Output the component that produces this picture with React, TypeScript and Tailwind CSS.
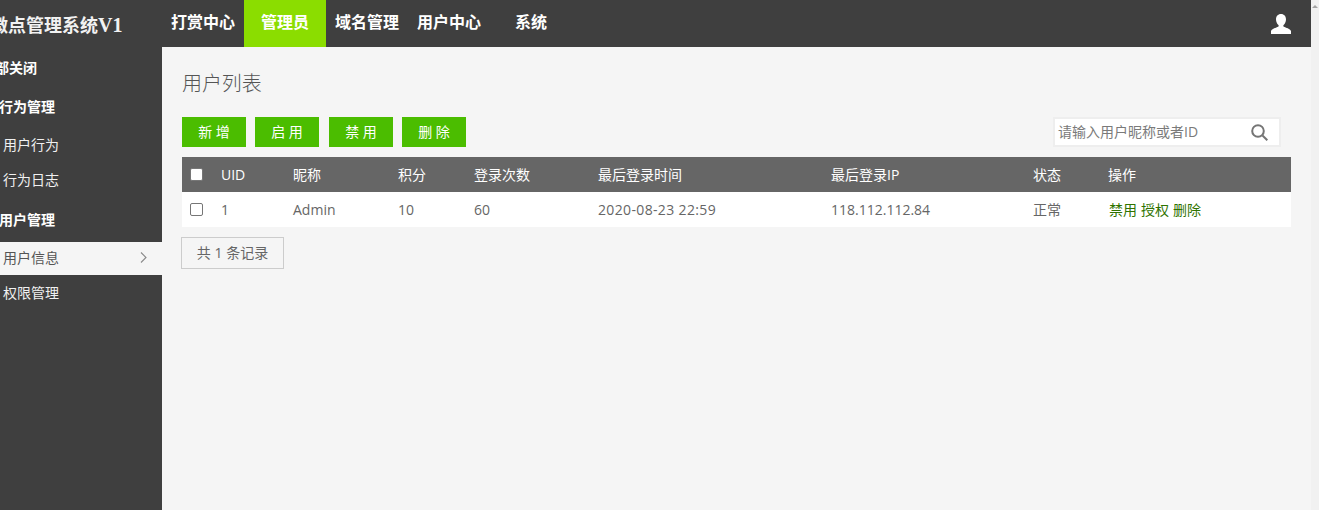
const sans = "font-['Open_Sans','Noto_Sans_CJK_SC',sans-serif]";

const navItems = [
  { label: '打赏中心', cls: 'pl-[171px] pr-[9px]' },
  { label: '管理员', cls: 'w-[82px] justify-center bg-[#8bdd00]' },
  { label: '域名管理', cls: 'pl-[9px] pr-[18px]' },
  { label: '用户中心', cls: 'pr-[34px]' },
  { label: '系统', cls: '' },
];

const actions = [
  { label: '新 增', cls: '' },
  { label: '启 用', cls: 'ml-[9px]' },
  { label: '禁 用', cls: 'ml-[10px]' },
  { label: '删 除', cls: 'ml-[9px]' },
];

const columns = 'grid grid-cols-[39px_72px_105px_76px_124px_233px_202px_75px_1fr] items-center h-[35px]';

function Check() {
  return <input type="checkbox" readOnly className="ml-2 block h-[13px] w-[13px] appearance-none rounded-[2px] border border-[#767676] bg-white" />;
}

function SideGroup({ label, cls }: { label: string; cls: string }) {
  return <div className={`flex h-[20px] items-center whitespace-nowrap text-[14px] font-bold text-white ${cls}`}>{label}</div>;
}

function SideItem({ label, active, cls }: { label: string; active?: boolean; cls: string }) {
  return (
    <div
      className={`flex h-[33px] items-center justify-between pl-[3px] pr-[15px] text-[14px] ${
        active ? 'bg-[#f5f5f5] text-[#555555]' : 'text-[#f0f0f0]'
      } ${cls}`}
    >
      <span>{label}</span>
      {active && (
        <svg width="7" height="11" viewBox="0 0 7 11" fill="none" stroke="#8a8a8a" strokeWidth="1.100">
          <path d="M1 .5l5 5-5 5" />
        </svg>
      )}
    </div>
  );
}

export default function App() {
  return (
    <div className={`flex h-[510px] w-[1319px] overflow-hidden bg-white ${sans}`}>
      <div className="flex h-full w-[1311px] flex-col">
        <header className="flex h-[47px] shrink-0 items-center justify-between bg-[#3f3f3f] text-white">
          <div className="relative flex h-full items-stretch text-[16px] font-bold">
            <div className="absolute left-[-10px] top-[14px] whitespace-nowrap font-['Liberation_Serif','Noto_Sans_CJK_SC',serif] text-[18px] font-bold leading-[22px] text-[#f2f2f2]">
              微点管理系统<span className="text-[20px]">V1</span>
            </div>
            {navItems.map(item => (
              <div key={item.label} className={`flex items-center pb-[3px] ${item.cls}`}>
                {item.label}
              </div>
            ))}
          </div>
          <svg className="mr-5" width="20" height="20" viewBox="0 0 20 20" fill="#ffffff">
            <path d="M10 0c3.200 0 5 2.300 5 5.300 0 2.400-1 4.600-2.400 5.800-.5.5-.4 1.300.2 1.600 2 .9 6.400 2 7.200 4.300V20H0v-3c.8-2.300 5.200-3.400 7.200-4.300.6-.3.7-1.100.2-1.600C6 9.900 5 7.700 5 5.300 5 2.300 6.800 0 10 0z" />
          </svg>
        </header>

        <div className="flex min-h-0 flex-1">
          <aside className="w-[162px] shrink-0 overflow-hidden bg-[#3f3f3f] pt-[10px]">
            <SideGroup label="全部关闭" cls="ml-[-19px]" />
            <SideGroup label="行为管理" cls="ml-[-1px] mt-[19px]" />
            <SideItem label="用户行为" cls="mt-[12px]" />
            <SideItem label="行为日志" cls="mt-[2px]" />
            <SideGroup label="用户管理" cls="ml-[-1px] mt-[13px]" />
            <SideItem label="用户信息" active cls="mt-[13px] pb-[2px]" />
            <SideItem label="权限管理" cls="mt-[2px] pb-[2px]" />
          </aside>

          <main className="flex-1 bg-[#f5f5f5] pl-5 pr-5">
            <h1 className="mt-[23px] text-[20px] font-light leading-[28px] tracking-[-0.1px] text-[#555555]">用户列表</h1>

            <div className="mt-[19px] flex items-center justify-between">
              <div className="flex">
                {actions.map(a => (
                  <button key={a.label} className={`h-[30px] w-[64px] bg-[#4bbd00] pb-[2px] text-[14px] text-white ${a.cls}`}>
                    {a.label}
                  </button>
                ))}
              </div>
              <div className="mr-[10px] flex h-[30px] w-[228px] items-center justify-between border-2 border-[#eeeeee] bg-white pl-[3px] pr-[11px]">
                <span className="pb-[2px] text-[14px] text-[#7a7a7a]">请输入用户昵称或者ID</span>
                <svg width="17" height="17" viewBox="0 0 17 17" fill="none" stroke="#757575" strokeWidth="2">
                  <circle cx="7" cy="7" r="5.800" />
                  <path d="M11.500 11.500l4.800 4.800" />
                </svg>
              </div>
            </div>

            <div className="mt-[10px] text-[14px]">
              <div className={`${columns} bg-[#666666] text-white`}>
                <Check />
                <div>UID</div>
                <div>昵称</div>
                <div>积分</div>
                <div>登录次数</div>
                <div>最后登录时间</div>
                <div>最后登录IP</div>
                <div>状态</div>
                <div>操作</div>
              </div>
              <div className={`${columns} bg-white text-[#666666]`}>
                <Check />
                <div>1</div>
                <div>Admin</div>
                <div>10</div>
                <div>60</div>
                <div className="tracking-[0.35px]">2020-08-23 22:59</div>
                <div>118.112.112.84</div>
                <div className="pb-[1px]">正常</div>
                <div className="flex gap-1 pb-[1px] pl-[1px] text-[#2f7300]">
                  <span>禁用</span>
                  <span>授权</span>
                  <span>删除</span>
                </div>
              </div>
            </div>

            <div className="ml-[-1px] mt-[10px] flex h-[32px] w-[103px] items-center justify-center border border-[#cccccc] pb-[1px] text-[14px] tracking-[0.05px] text-[#666666]">
              共 1 条记录
            </div>
          </main>
        </div>
      </div>

      <div className="flex w-[8px] shrink-0 justify-center bg-[#f1f1f1] pt-[5px]">
        <div className="h-0 w-0 border-x-[3px] border-b-[3px] border-x-transparent border-b-[#a3a3a3]" />
      </div>
    </div>
  );
}
